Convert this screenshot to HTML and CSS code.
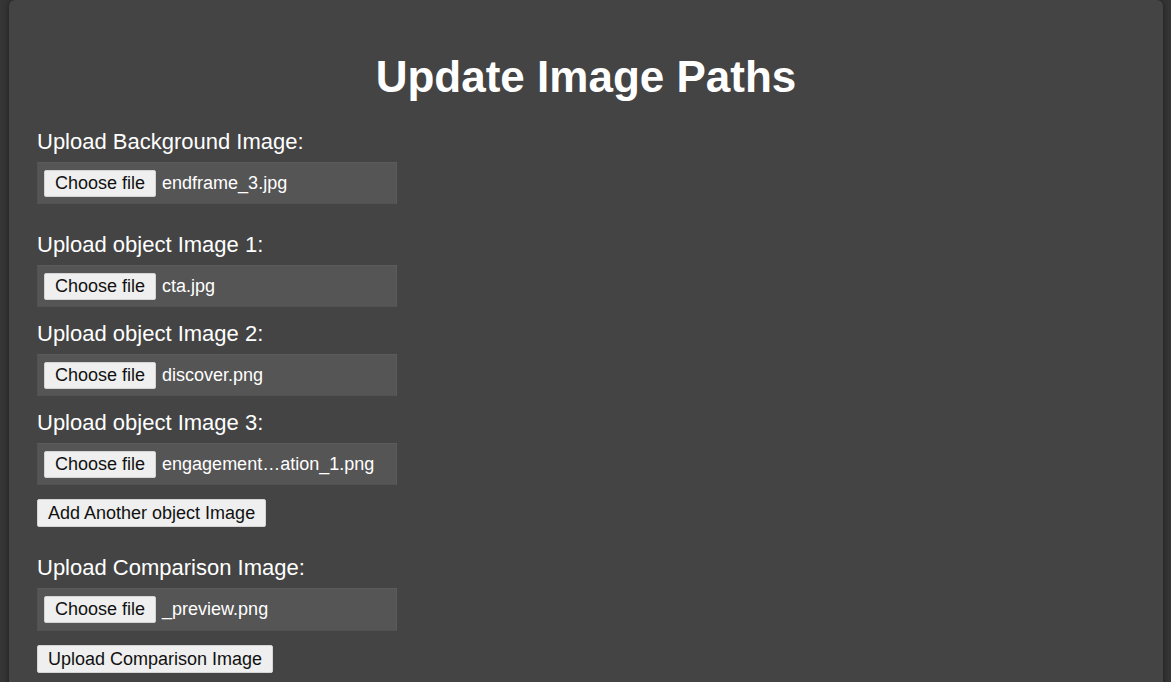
FILE: index.html
```html
<!DOCTYPE html>
<html lang="en">
<head>
<meta charset="utf-8">
<title>Update Image Paths</title>
<link rel="stylesheet" href="styles.css">
</head>
<body>
<main class="container">
  <h1 class="title">Update Image Paths</h1>

  <section class="group group-bg">
    <label class="field-label">Upload Background Image:</label>
    <div class="file-box">
      <button class="btn" type="button">Choose file</button>
      <span class="file-name">endframe_3.jpg</span>
    </div>
  </section>

  <section class="group group-objects">
    <label class="field-label">Upload object Image 1:</label>
    <div class="file-box">
      <button class="btn" type="button">Choose file</button>
      <span class="file-name">cta.jpg</span>
    </div>
    <label class="field-label">Upload object Image 2:</label>
    <div class="file-box">
      <button class="btn" type="button">Choose file</button>
      <span class="file-name">discover.png</span>
    </div>
    <label class="field-label">Upload object Image 3:</label>
    <div class="file-box">
      <button class="btn" type="button">Choose file</button>
      <span class="file-name">engagement…ation_1.png</span>
    </div>
    <button class="btn btn-action" type="button">Add Another object Image</button>
  </section>

  <section class="group group-compare">
    <label class="field-label">Upload Comparison Image:</label>
    <div class="file-box file-box-compare">
      <button class="btn" type="button">Choose file</button>
      <span class="file-name">_preview.png</span>
    </div>
    <button class="btn btn-action" type="button">Upload Comparison Image</button>
  </section>
</main>
</body>
</html>
```

FILE: styles.css
```css
html, body {
  margin: 0;
  padding: 0;
  background: #353535;
  font-family: "Liberation Sans", Arial, sans-serif;
  color: #ffffff;
}

.container {
  margin: 0 8px 0 9px;
  padding: 52px 28px 40px;
  background: #444444;
  border-radius: 6px;
  box-shadow: 0 0 6px rgba(0, 0, 0, 0.45);
  min-height: 700px;
  box-sizing: border-box;
}

.title {
  margin: 0 0 27px;
  font-size: 44px;
  line-height: 50px;
  font-weight: bold;
  text-align: center;
  color: #ffffff;
}

.group {
  display: flex;
  flex-direction: column;
  align-items: flex-start;
}

.group-bg {
  margin-bottom: 14px;
}

.group-objects {
  margin-bottom: 28px;
}

.field-label {
  display: block;
  font-size: 22px;
  line-height: 25px;
  margin-bottom: 8px;
}

.file-box {
  box-sizing: border-box;
  width: 360px;
  height: 42px;
  padding: 0 6px;
  margin-bottom: 14px;
  display: flex;
  align-items: center;
  gap: 6px;
  background: #555555;
  border: 1px solid #5b5b5b;
  border-left-color: #525252;
  border-bottom-color: #525252;
}

.file-box-compare {
  height: 43px;
}

.btn {
  font-family: "Liberation Sans", Arial, sans-serif;
  font-size: 18px;
  line-height: 21px;
  height: 27px;
  padding: 2px 10px;
  box-sizing: border-box;
  background: #efefef;
  color: #111111;
  border: 1px solid #d4d4d4;
  border-radius: 2px;
  cursor: pointer;
  white-space: nowrap;
}

.file-name {
  font-size: 18px;
  line-height: 21px;
  color: #ffffff;
  white-space: nowrap;
}

.btn-action {
  height: 28px;
  margin-bottom: 0;
}
```
